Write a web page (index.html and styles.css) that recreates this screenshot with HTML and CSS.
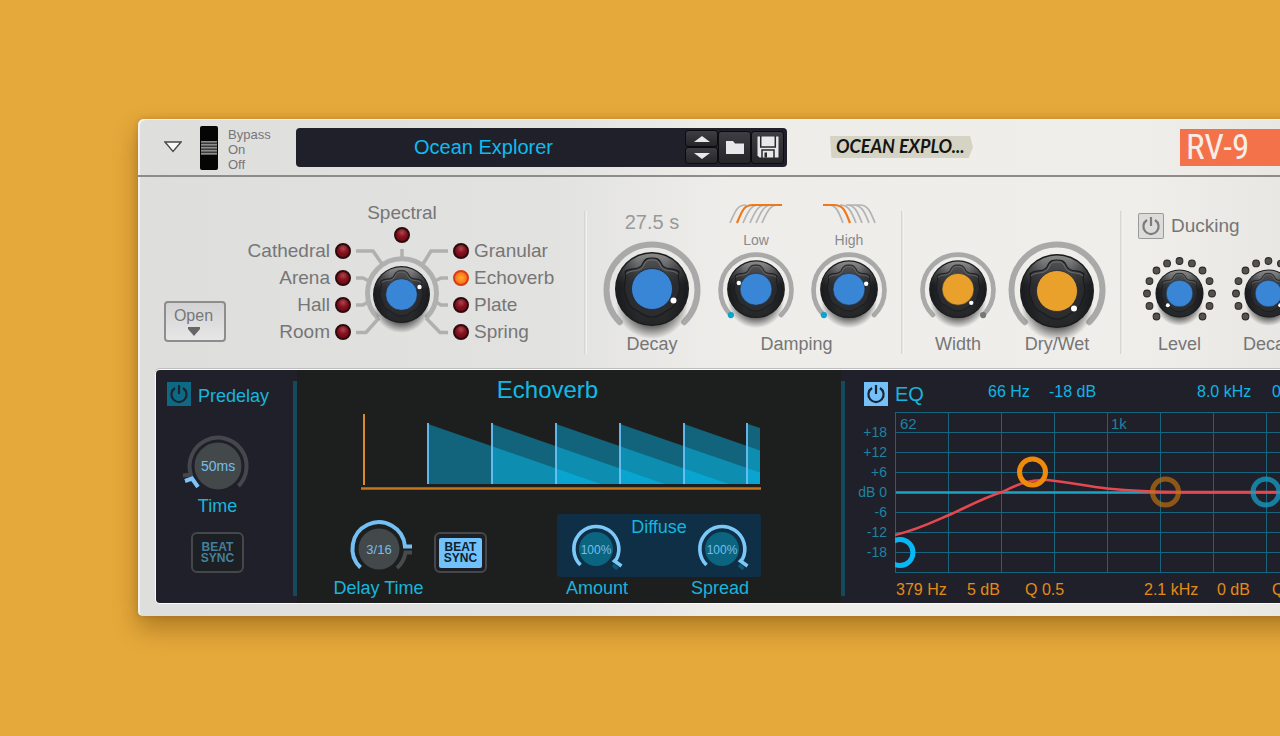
FILE: index.html
```html
<!DOCTYPE html>
<html lang="en">

<head>
    <meta charset="UTF-8">
    <meta name="viewport" content="width=device-width, initial-scale=1.0">
    <title>RV-9 Ocean Explorer</title>
    <link rel="stylesheet" href="styles.css">
</head>

<body>
    <!-- shared knob and icon shapes -->
    <svg class="defs" width="0" height="0" aria-hidden="true">
        <defs>
            <linearGradient id="body-fill" x1="0" y1="0" x2="0" y2="1">
                <stop offset="0" stop-color="#8a8a8a" />
                <stop offset="0.22" stop-color="#5c5d5f" />
                <stop offset="0.42" stop-color="#303134" />
                <stop offset="1" stop-color="#252628" />
            </linearGradient>
            <linearGradient id="side-fill" x1="0" y1="0" x2="1" y2="0">
                <stop offset="0" stop-color="#0c0d10" stop-opacity="0.6" />
                <stop offset="0.3" stop-color="#0c0d10" stop-opacity="0" />
                <stop offset="0.7" stop-color="#0c0d10" stop-opacity="0" />
                <stop offset="1" stop-color="#0c0d10" stop-opacity="0.6" />
            </linearGradient>
            <radialGradient id="shadow-fill">
                <stop offset="0.5" stop-color="#000" stop-opacity="0.75" />
                <stop offset="0.8" stop-color="#000" stop-opacity="0.3" />
                <stop offset="1" stop-color="#000" stop-opacity="0" />
            </radialGradient>
            <symbol id="knob" viewBox="-50 -50 100 100" overflow="visible">
                <ellipse cx="0" cy="16" rx="36" ry="34" fill="url(#shadow-fill)" />
                <circle r="37" fill="#1b1c1e" />
                <circle r="35.5" fill="url(#body-fill)" />
                <circle r="35.5" fill="url(#side-fill)" />
                <path d="M-27 -17 C-22 -22 -14 -18 -10 -24 C-7 -31 -4 -31 0 -31 C4 -31 7 -31 10 -24 C14 -18 22 -22 27 -17 C24 -10 30 -4 27 4 C24 10 25 16 18 20 C12 22 9 28 0 28 C-9 28 -12 22 -18 20 C-25 16 -24 10 -27 4 C-30 -4 -24 -10 -27 -17Z" fill="#2f3033" fill-opacity="0.55" stroke="#1a1b1d" stroke-width="1.2" />
                <path d="M-26 -15 C-21 -20 -14 -16 -9 -22 C-6 -29 -4 -29 0 -29 C4 -29 6 -29 9 -22 C14 -16 21 -20 26 -15" fill="none" stroke="#77787a" stroke-width="0.8" />
                <circle r="20.5" fill="currentColor" stroke="#1a2633" stroke-width="0.8" />
            </symbol>
            <symbol id="ring" viewBox="-50 -50 100 100" overflow="visible">
                <path d="M-32.2 32.2 A45.5 45.5 0 1 1 32.2 32.2" fill="none" stroke="#a9a9a9" stroke-width="6" stroke-linecap="round" />
            </symbol>
            <symbol id="dots" viewBox="-50 -50 100 100" overflow="visible">
                <g fill="#55524e" stroke="#2b2927" stroke-width="1.6">
                    <circle cx="-35.4" cy="35.4" r="5.2" /><circle cx="-46.2" cy="19.1" r="5.2" /><circle cx="-50" cy="0" r="5.2" />
                    <circle cx="-46.2" cy="-19.1" r="5.2" /><circle cx="-35.4" cy="-35.4" r="5.2" /><circle cx="-19.1" cy="-46.2" r="5.2" />
                    <circle cx="0" cy="-50" r="5.2" /><circle cx="19.1" cy="-46.2" r="5.2" /><circle cx="35.4" cy="-35.4" r="5.2" />
                    <circle cx="46.2" cy="-19.1" r="5.2" /><circle cx="50" cy="0" r="5.2" /><circle cx="46.2" cy="19.1" r="5.2" />
                    <circle cx="35.4" cy="35.4" r="5.2" />
                </g>
            </symbol>
            <symbol id="power" viewBox="0 0 24 24">
                <path d="M8 6 A7.6 7.6 0 1 0 16 6 M12 3 V12" fill="none" stroke="currentColor" stroke-width="2.2" />
            </symbol>
        </defs>
    </svg>

    <main class="device">
        <header class="top-bar">
            <button class="fold" aria-label="Fold">
                <svg width="18" height="12" viewBox="0 0 18 12"><path d="M1 1 H17 L9 10.5Z" fill="#fafafa" stroke="#4a4a4a" stroke-width="1.4" /></svg>
            </button>
            <div class="switch">
                <span class="switch-grip"></span>
                <input type="range" min="0" max="2" value="1" aria-label="Bypass, On, Off">
            </div>
            <div class="switch-labels">
                <span>Bypass</span>
                <span>On</span>
                <span>Off</span>
            </div>
            <div class="patch">
                <span class="patch-name">Ocean Explorer</span>
                <div class="patch-step">
                    <button aria-label="Previous patch"><svg width="16" height="6" viewBox="0 0 16 6"><path d="M0 6 L8 0 L16 6Z" fill="#e8e8ea" /></svg></button>
                    <button aria-label="Next patch"><svg width="16" height="6" viewBox="0 0 16 6"><path d="M0 0 L8 6 L16 0Z" fill="#e8e8ea" /></svg></button>
                </div>
                <button class="patch-button" aria-label="Browse patches">
                    <svg width="18" height="14" viewBox="0 0 18 14"><path d="M0 1 H7 L9 3.5 H18 V14 H0Z" fill="#e8e8ea" /></svg>
                </button>
                <button class="patch-button" aria-label="Save patch">
                    <svg width="22" height="22" viewBox="0 0 22 22">
                        <path d="M0.5 0.5 H21.5 V21.5 H2.5 L0.5 19.5Z" fill="#e8e8ea" />
                        <path d="M3.7 0 V11 H18.3 V0 M5 22 V14 H17 V22" fill="none" stroke="#28282d" stroke-width="1.5" />
                        <path d="M7.5 16.5 H10 V21.5 H7.5Z" fill="#28282d" />
                    </svg>
                </button>
            </div>
            <div class="tape">OCEAN EXPLO...</div>
            <div class="brand">RV-9</div>
        </header>

        <section class="controls">
            <div class="algorithm">
                <button class="open">
                    Open
                    <svg width="12" height="9" viewBox="0 0 12 9"><path d="M0 0 H12 V2 L6 9 L0 2Z" fill="#666" /></svg>
                </button>
                <div class="selector" role="radiogroup" aria-label="Algorithm">
                    <div class="bank bank-left">
                        <label>Cathedral <input type="radio" name="algo"></label>
                        <label>Arena <input type="radio" name="algo"></label>
                        <label>Hall <input type="radio" name="algo"></label>
                        <label>Room <input type="radio" name="algo"></label>
                    </div>
                    <div class="dial">
                        <label class="spectral">Spectral <input type="radio" name="algo"></label>
                        <svg class="blue" width="102" height="108" viewBox="0 0 102 108">
                            <g fill="none" stroke="#b0b0b0" stroke-width="3.5">
                                <path d="M5 14 H22 L31 27 M97 14 H80 L72 27 M51 12 V24" />
                                <path d="M5 41 H12 L18 44 M97 41 H90 L84 44 M5 68 H12 L17 65 M97 68 H90 L85 65" />
                                <path d="M5 95.5 H15 L28 81 M97 95.5 H89 L75 81" />
                                <path d="M27 81 A34.5 34.5 0 1 1 75 81" stroke-width="5" />
                            </g>
                            <use href="#knob" x="12" y="19" width="77" height="77" />
                            <circle cx="68.5" cy="50" r="2.2" fill="#fff" />
                        </svg>
                    </div>
                    <div class="bank">
                        <label><input type="radio" name="algo"> Granular</label>
                        <label><input type="radio" name="algo" checked> Echoverb</label>
                        <label><input type="radio" name="algo"> Plate</label>
                        <label><input type="radio" name="algo"> Spring</label>
                    </div>
                </div>
            </div>

            <div class="divider"></div>

            <div class="group reverb">
                <div class="knob-block">
                    <span class="readout">27.5 s</span>
                    <div class="knob knob-large blue">
                        <svg viewBox="-50 -50 100 100">
                            <use href="#ring" x="-50" y="-50" width="100" height="100" />
                            <use href="#knob" x="-50" y="-51" width="100" height="100" />
                            <circle cx="21.5" cy="10.5" r="3" fill="#fff" />
                        </svg>
                        <input type="range" id="decay" value="70">
                    </div>
                    <label for="decay">Decay</label>
                </div>
                <div class="damping">
                    <div class="damping-knobs">
                        <div class="knob-block">
                            <svg class="filter" width="54" height="22" viewBox="0 0 54 22">
                                <g fill="none" stroke="#b4b4b4" stroke-width="1.7">
                                    <path d="M1 20 C7 6 9 2 17 2 M14 20 C20 6 23 2 30 2 M21 20 C27 6 30 2 37 2 M27 20 C33 6 36 2 43 2 M33 20 C39 6 42 2 49 2" />
                                    <path d="M8 20 C14 5 16 2 24 2 H53" stroke="#f07818" stroke-width="2.2" />
                                </g>
                            </svg>
                            <label class="small-label" for="low">Low</label>
                            <div class="knob knob-small blue">
                                <svg viewBox="-50 -50 100 100">
                                    <use href="#ring" x="-50" y="-50" width="100" height="100" />
                                    <use href="#knob" x="-50" y="-51" width="100" height="100" />
                                    <circle cx="-22" cy="-9" r="2.8" fill="#fff" />
                                    <circle cx="-32.2" cy="32.2" r="4" fill="#0aa5cf" />
                                </svg>
                                <input type="range" id="low" value="0">
                            </div>
                        </div>
                        <div class="knob-block">
                            <svg class="filter" width="54" height="22" viewBox="0 0 54 22">
                                <g fill="none" stroke="#b4b4b4" stroke-width="1.7">
                                    <path d="M21 20 C16 7 14 2 6 2 M34 20 C29 7 26 2 18 2 M40 20 C35 7 32 2 25 2 M47 20 C42 7 39 2 31 2 M53 20 C48 7 45 2 38 2 H24" />
                                    <path d="M1 2 H12 C21 2 23 7 28 20" stroke="#f07818" stroke-width="2.2" />
                                </g>
                            </svg>
                            <label class="small-label" for="high">High</label>
                            <div class="knob knob-small blue">
                                <svg viewBox="-50 -50 100 100">
                                    <use href="#ring" x="-50" y="-50" width="100" height="100" />
                                    <use href="#knob" x="-50" y="-51" width="100" height="100" />
                                    <circle cx="22" cy="-8" r="2.8" fill="#fff" />
                                    <circle cx="-32.2" cy="32.2" r="4" fill="#0aa5cf" />
                                </svg>
                                <input type="range" id="high" value="0">
                            </div>
                        </div>
                    </div>
                    <span class="group-label">Damping</span>
                </div>
            </div>

            <div class="divider"></div>

            <div class="group mix">
                <div class="knob-block">
                    <div class="knob knob-small amber">
                        <svg viewBox="-50 -50 100 100">
                            <use href="#ring" x="-50" y="-50" width="100" height="100" />
                            <use href="#knob" x="-50" y="-51" width="100" height="100" />
                            <circle cx="17" cy="16.5" r="2.8" fill="#fff" />
                            <circle cx="32.2" cy="32.2" r="4" fill="#777" />
                        </svg>
                        <input type="range" id="width" value="100">
                    </div>
                    <label for="width">Width</label>
                </div>
                <div class="knob-block">
                    <div class="knob knob-large amber">
                        <svg viewBox="-50 -50 100 100">
                            <use href="#ring" x="-50" y="-50" width="100" height="100" />
                            <use href="#knob" x="-50" y="-49" width="100" height="100" />
                            <circle cx="17" cy="18.5" r="3" fill="#fff" />
                        </svg>
                        <input type="range" id="drywet" value="90">
                    </div>
                    <label for="drywet">Dry/Wet</label>
                </div>
            </div>

            <div class="divider"></div>

            <div class="ducking">
                <div class="ducking-head">
                    <button class="power power-grey" aria-label="Ducking on"><svg width="24" height="24"><use href="#power" /></svg></button>
                    Ducking
                </div>
                <div class="ducking-knobs">
                    <div class="knob-block">
                        <div class="knob knob-mini blue">
                            <svg viewBox="-50 -50 100 100">
                                <use href="#dots" x="-50" y="-50" width="100" height="100" />
                                <use href="#knob" x="-50" y="-50" width="100" height="100" />
                                <circle cx="-18" cy="18" r="3" fill="#fff" />
                            </svg>
                            <input type="range" id="level" value="0">
                        </div>
                        <label for="level">Level</label>
                    </div>
                    <div class="knob-block">
                        <div class="knob knob-mini blue">
                            <svg viewBox="-50 -50 100 100">
                                <use href="#dots" x="-50" y="-50" width="100" height="100" />
                                <use href="#knob" x="-50" y="-50" width="100" height="100" />
                                <circle cx="18" cy="18" r="3" fill="#fff" />
                            </svg>
                            <input type="range" id="duck-decay" value="100">
                        </div>
                        <label for="duck-decay">Decay</label>
                    </div>
                </div>
            </div>
        </section>

        <section class="display">
            <div class="predelay">
                <div class="panel-head">
                    <button class="power power-dim" aria-label="Predelay on"><svg width="24" height="24"><use href="#power" /></svg></button>
                    <label for="time">Predelay</label>
                </div>
                <div class="predelay-body">
                    <div class="knob">
                        <svg width="72" height="60" viewBox="-36 -30 72 60">
                            <path d="M20.500 20 A28.500 28.500 0 1 0 -27.200 8.500 L-35 9.500" fill="none" stroke="#45474d" stroke-width="4" />
                            <circle r="23.5" fill="#43484b" />
                            <path d="M-33 15 L-26 12.5 L-20 21" fill="none" stroke="#7cc4fa" stroke-width="4" />
                            <text y="5" font-size="14">50ms</text>
                        </svg>
                        <input type="range" id="time" value="5">
                    </div>
                    <label for="time">Time</label>
                    <button class="sync">BEAT<br>SYNC</button>
                </div>
            </div>

            <div class="bar"></div>

            <div class="echo">
                <h2>Echoverb</h2>
                <svg class="echo-graph" width="400" height="80" viewBox="0 0 400 80">
                    <!-- one wedge per echo, overlaps get brighter -->
                    <g fill="#12647c">
                        <path d="M67 12 L240 72 H67Z" />
                        <path d="M131 12 L304 72 H131Z" />
                        <path d="M195 12 L368 72 H195Z" />
                        <path d="M259 12 L399 60.5 V72 H259Z" />
                        <path d="M323 12 L399 38.4 V72 H323Z" />
                        <path d="M387 12 L399 16 V72 H387Z" />
                    </g>
                    <g fill="#0d8db0">
                        <path d="M131 34.2 L240 72 H131Z" />
                        <path d="M195 34.2 L304 72 H195Z" />
                        <path d="M259 34.2 L368 72 H259Z" />
                        <path d="M323 34.2 L399 60.5 V72 H323Z" />
                        <path d="M387 34.2 L399 38.4 V72 H387Z" />
                    </g>
                    <g fill="#09a4cf">
                        <path d="M195 56.4 L240 72 H195Z" />
                        <path d="M259 56.4 L304 72 H259Z" />
                        <path d="M323 56.4 L368 72 H323Z" />
                        <path d="M387 56.4 L399 60.5 V72 H387Z" />
                    </g>
                    <path d="M67 11 V72 M131 11 V72 M195 11 V72 M259 11 V72 M323 11 V72 M386 11 V72" stroke="#6fc3f7" stroke-width="1.8" />
                    <path d="M3 2 V73" stroke="#d98a2b" stroke-width="2" />
                    <path d="M0 76.5 H400" stroke="#c8751c" stroke-width="2.4" />
                </svg>
                <div class="echo-row">
                    <div class="delay-block">
                        <div class="knob">
                            <svg width="68" height="56" viewBox="-34 -28 68 56">
                                <circle r="20.5" fill="#43484a" />
                                <path d="M33 3.5 H26.5 A26 26 0 0 1 18 19" fill="none" stroke="#484b4d" stroke-width="4" />
                                <path d="M-18.5 18.5 A26.3 26.3 0 1 1 26 -2.5 H33" fill="none" stroke="#74bff6" stroke-width="4" />
                                <text y="5" font-size="13">3/16</text>
                            </svg>
                            <input type="range" id="delay-time" value="80">
                        </div>
                        <label for="delay-time">Delay Time</label>
                    </div>
                    <button class="sync sync-on"><span>BEAT<br>SYNC</span></button>
                    <div class="diffuse">
                        <div class="diffuse-panel">
                            <div class="knob">
                                <svg width="60" height="48" viewBox="-30 -24 60 48">
                                    <circle r="17" fill="#0b6480" />
                                    <path d="M-15.5 16 A22.5 22.5 0 1 1 20.5 10 L18.5 12 L25.5 17" fill="none" stroke="#7cc8f8" stroke-width="3.6" />
                                    <path d="M17 16 L21.5 20" stroke="#0e5870" stroke-width="3.6" />
                                    <text y="5" font-size="12">100%</text>
                                </svg>
                                <input type="range" id="amount" value="100">
                            </div>
                            <span>Diffuse</span>
                            <div class="knob">
                                <svg width="60" height="48" viewBox="-30 -24 60 48">
                                    <circle r="17" fill="#0b6480" />
                                    <path d="M-15.5 16 A22.5 22.5 0 1 1 20.5 10 L18.5 12 L25.5 17" fill="none" stroke="#7cc8f8" stroke-width="3.6" />
                                    <path d="M17 16 L21.5 20" stroke="#0e5870" stroke-width="3.6" />
                                    <text y="5" font-size="12">100%</text>
                                </svg>
                                <input type="range" id="spread" value="100">
                            </div>
                        </div>
                        <div class="diffuse-labels">
                            <label for="amount">Amount</label>
                            <label for="spread">Spread</label>
                        </div>
                    </div>
                </div>
            </div>

            <div class="bar"></div>

            <div class="eq">
                <div class="eq-head">
                    <button class="power power-lit" aria-label="EQ on"><svg width="24" height="24"><use href="#power" /></svg></button>
                    <h2>EQ</h2>
                    <div class="eq-shelves">
                        <span>66 Hz</span>
                        <span>-18 dB</span>
                        <span>8.0 kHz</span>
                        <span>0 dB</span>
                    </div>
                </div>
                <div class="eq-main">
                    <div class="scale">
                        <span>+18</span>
                        <span>+12</span>
                        <span>+6</span>
                        <span>dB&nbsp;0</span>
                        <span>-6</span>
                        <span>-12</span>
                        <span>-18</span>
                    </div>
                    <svg class="eq-graph" width="478" height="162" viewBox="0 0 478 162">
                        <path d="M0 0.5 H478 M0 20.5 H478 M0 40.5 H478 M0 60.5 H478 M0 100.5 H478 M0 120.5 H478 M0 140.5 H478 M0 160.5 H478
                            M0.5 0 V161 M53.5 0 V161 M106.5 0 V161 M159.5 0 V161 M212.5 0 V161 M265.5 0 V161 M318.5 0 V161 M371.5 0 V161 M424.5 0 V161" stroke="#17657c" />
                        <path d="M1 80.5 H478" stroke="#1ba3c6" stroke-width="2.4" />
                        <text class="freq" x="5" y="17">62</text>
                        <text class="freq" x="216" y="17">1k</text>
                        <path d="M0 123 C22 118 38 110 54 103 S88 86 107 80 C124 72 134 67 152 68 C174 70 190 74 212 76.5 C236 79 256 80 286 80 H478" fill="none" stroke="#e5484f" stroke-width="2.5" />
                        <g fill="none" stroke-width="5">
                            <circle cx="5" cy="140.5" r="13" stroke="#08b8f4" />
                            <circle cx="137.5" cy="60" r="13" stroke="#f08a0a" />
                            <circle cx="270.5" cy="80" r="13" stroke="#c87410" stroke-opacity="0.65" />
                            <circle cx="371" cy="80" r="13" stroke="#159fc8" stroke-opacity="0.75" />
                        </g>
                    </svg>
                </div>
                <div class="eq-bands">
                    <span>379 Hz</span>
                    <span>5 dB</span>
                    <span>Q 0.5</span>
                    <span>2.1 kHz</span>
                    <span>0 dB</span>
                    <span>Q 0.5</span>
                </div>
            </div>
        </section>
    </main>
</body>

</html>
```
FILE: styles.css
```css
* {
    box-sizing: border-box;
}

body {
    margin: 0;
    padding: 119px 0 120px 138px;
    background-color: #e5a83a;
    font-family: "Liberation Sans", Arial, sans-serif;
    color: #767676;
    overflow: hidden;
}

button {
    font-family: inherit;
    padding: 0;
    border: none;
    cursor: pointer;
}

svg {
    display: block;
}

h2 {
    margin: 0;
    font-weight: normal;
}

.defs {
    position: absolute;
}

/* the right end of the unit runs off the window */
.device {
    margin-right: -40px;
    background: linear-gradient(90deg, #dededd 0, #e2e2e1 35%, #eeedea 50%, #efeeeb 85%, #e6e5e2 100%);
    border-radius: 6px 0 0 5px;
    box-shadow: 0 12px 24px rgba(90, 55, 0, 0.4), 0 0 6px rgba(90, 55, 0, 0.2), inset 2px 1px 0 #f3f2ee;
    padding-bottom: 13px;
    white-space: nowrap;
}

/* top bar */
.top-bar {
    display: flex;
    align-items: center;
    height: 58px;
    padding-left: 26px;
    border-bottom: 2px solid #8c8c8b;
}

.fold {
    background: none;
    margin-right: 18px;
}

.switch {
    position: relative;
    width: 18px;
    height: 44px;
    background: #050505;
    border-radius: 2px;
    padding-top: 15px;
    margin-top: 2px;
}

.switch-grip {
    display: block;
    height: 14px;
    background: repeating-linear-gradient(#8e8e8e 0, #8e8e8e 1px, #3a3a3a 2px, #3a3a3a 3px);
    margin: 0 1px;
}

.switch input,
.knob input {
    position: absolute;
    inset: 0;
    width: 100%;
    height: 100%;
    margin: 0;
    opacity: 0;
    cursor: pointer;
}

.switch-labels {
    display: flex;
    flex-direction: column;
    width: 78px;
    padding: 4px 0 0 10px;
    font-size: 13px;
    line-height: 15px;
}

.patch {
    display: flex;
    align-items: center;
    gap: 2px;
    width: 491px;
    height: 39px;
    padding-right: 4px;
    background: #20202a;
    border-radius: 4px;
}

.patch-name {
    flex: 1;
    padding-left: 118px;
    font-size: 20px;
    color: #0cbcf2;
}

.patch-step {
    display: flex;
    flex-direction: column;
    gap: 2px;
}

.patch button {
    display: flex;
    align-items: center;
    justify-content: center;
    width: 31px;
    height: 31px;
    background: linear-gradient(#3d3d43, #25252a);
    border-radius: 3px;
    box-shadow: 0 0 0 1px #0c0c0f;
}

.patch .patch-step button {
    height: 15px;
}

.tape {
    width: 143px;
    height: 22px;
    margin-left: 43px;
    padding-left: 6px;
    background: #d5d4c4;
    clip-path: polygon(0 0, 98% 0, 100% 50%, 97% 100%, 1% 100%);
    font-family: Lato, "Liberation Sans", sans-serif;
    font-size: 18px;
    font-weight: 700;
    font-style: italic;
    line-height: 20px;
    color: #141414;
}

.brand {
    flex: 1;
    height: 37px;
    margin-left: 207px;
    padding-left: 6px;
    background: #f4724a;
    font-family: "Roboto Condensed", "Liberation Sans Narrow", "Liberation Sans", sans-serif;
    font-size: 35px;
    line-height: 38px;
    color: #f7ede6;
}

/* light panel */
.controls {
    display: flex;
    align-items: flex-end;
    padding: 26px 0 14px;
}

.divider {
    flex: none;
    width: 3px;
    height: 143px;
    background: linear-gradient(90deg, #cfcfd2, #fbfaf0);
}

.algorithm {
    display: flex;
    align-items: flex-end;
    flex: none;
    width: 446px;
    padding-left: 26px;
}

.open {
    display: flex;
    flex-direction: column;
    align-items: center;
    gap: 2px;
    width: 62px;
    height: 41px;
    margin-bottom: 12px;
    padding: 4px 3px 0 0;
    border: 2px solid #8d8d8d;
    border-radius: 4px;
    background: linear-gradient(#d3d3d3, #e6e6e6);
    font-size: 16px;
    line-height: 18px;
    color: #777;
}

.selector {
    display: flex;
    align-items: flex-end;
    margin-bottom: 9px;
}

.bank {
    width: 109px;
}

.bank-left {
    width: 125px;
}

.bank label {
    display: flex;
    align-items: center;
    gap: 5px;
    height: 27px;
    font-size: 19px;
}

.bank-left label {
    justify-content: flex-end;
}

.spectral {
    display: flex;
    flex-direction: column;
    align-items: center;
    gap: 4px;
    margin-bottom: -6px;
    font-size: 19px;
    line-height: 20px;
}

.selector input {
    appearance: none;
    width: 16px;
    height: 16px;
    margin: 0;
    border: 2px solid #2b0b0e;
    border-radius: 50%;
    background: radial-gradient(circle at 50% 30%, #a84850 0, #86101c 45%, #650812 100%);
}

.selector input:checked {
    border-color: #d83c14;
    background: radial-gradient(circle, #ffae30 0, #fa7a1c 60%, #ee4a18 100%);
}

.blue {
    color: #3a86d6;
}

.amber {
    color: #eaa12b;
}

.group {
    display: flex;
    align-items: flex-end;
    flex: none;
    padding-left: 15px;
}

.reverb {
    gap: 15px;
    width: 314px;
}

.mix {
    gap: 10px;
    width: 216px;
}

.knob-block,
.damping {
    display: flex;
    flex-direction: column;
    align-items: center;
    font-size: 18px;
    line-height: 20px;
}

.damping-knobs {
    display: flex;
    gap: 15px;
}

.group-label {
    padding-right: 12px;
}

.knob {
    position: relative;
}

.knob svg {
    overflow: visible;
}

.knob-large {
    width: 100px;
    height: 100px;
    margin-bottom: -6px;
}

.knob-small {
    width: 78px;
    height: 78px;
    margin-bottom: 5px;
}

.knob-mini {
    width: 65px;
    height: 65px;
    margin-bottom: 8px;
}

.knob-block label {
    position: relative;
}

.readout {
    font-size: 20px;
    line-height: 24px;
    margin-bottom: 6px;
    color: #999;
}

.filter {
    margin-bottom: 6px;
}

.small-label {
    font-size: 14px;
    line-height: 18px;
    margin-bottom: 2px;
    color: #8a8a8a;
}

.ducking {
    flex: none;
    padding-left: 16px;
}

.ducking-head {
    display: flex;
    align-items: center;
    gap: 8px;
    margin-bottom: 23px;
    font-size: 19px;
}

.ducking-knobs {
    display: flex;
    gap: 24px;
    padding-left: 8px;
}

.power {
    flex: none;
    width: 24px;
    height: 24px;
}

.power-grey {
    background: #dcdcda;
    color: #7c7c7c;
    box-shadow: 0 0 0 1px #9a9a9a;
    border-radius: 1px;
}

.power-dim {
    background: #0e6a84;
    color: #1d2230;
}

.power-lit {
    background: #74c0f8;
    color: #1c2434;
}

/* dark display */
.display {
    display: flex;
    align-items: stretch;
    height: 233px;
    margin: 2px 0 0 18px;
    padding-top: 11px;
    background: #20202a;
    border-radius: 4px 0 0 4px;
    box-shadow: 0 0 0 1px #fbfaf5, 0 -1px 0 1px #bdbdbd;
    font-size: 18px;
    line-height: 20px;
    color: #17b5dd;
    overflow: hidden;
}

.bar {
    flex: none;
    width: 4px;
    margin-bottom: 7px;
    background: #17495c;
}

.predelay {
    flex: none;
    width: 137px;
}

.panel-head {
    display: flex;
    align-items: center;
    gap: 7px;
    padding: 1px 0 0 11px;
}

.panel-head label {
    padding-top: 4px;
}

.predelay-body {
    display: flex;
    flex-direction: column;
    align-items: center;
    padding: 30px 14px 0 0;
}

.predelay-body label {
    margin-bottom: 16px;
}

.knob text {
    fill: #74bfec;
    text-anchor: middle;
}

.sync {
    flex: none;
    width: 53px;
    height: 41px;
    padding: 4px;
    background: #1c1f24;
    border: 2px solid #46474a;
    border-radius: 6px;
    font-size: 12px;
    font-weight: bold;
    line-height: 11px;
    color: #45809a;
}

.sync-on {
    padding: 2px 3px;
}

.sync-on span {
    display: block;
    padding: 4px 0;
    background: #6fc2fb;
    border-radius: 2px;
    color: #10202c;
}

.echo {
    flex: none;
    width: 544px;
    margin: -11px 0 0;
    padding: 8px 80px 0 37px;
    background: #1d1f1e;
}

.echo h2 {
    font-size: 24px;
    line-height: 24px;
    text-align: center;
    color: #13b9e6;
}

.echo-graph {
    margin: 10px 0 22px auto;
}

.echo-row {
    display: flex;
    align-items: flex-start;
}

.delay-block {
    display: flex;
    flex-direction: column;
    align-items: center;
    gap: 1px;
    width: 89px;
    padding-top: 7px;
}

.echo-row .sync {
    margin: 18px 0 0 11px;
}

.diffuse {
    width: 204px;
    margin-left: auto;
}

.diffuse-panel {
    display: flex;
    justify-content: space-between;
    height: 63px;
    padding: 3px 9px;
    background: #0e2f46;
    border-radius: 3px;
}

.diffuse-panel .knob {
    padding-top: 8px;
}

.diffuse-labels {
    display: flex;
    justify-content: space-between;
    padding: 1px 12px 0 9px;
}

.eq {
    flex: 1;
    min-width: 0;
    overflow: hidden;
    padding-left: 13px;
    font-size: 16px;
}

.eq-head {
    display: flex;
    align-items: center;
    padding: 1px 0 0 6px;
}

.eq h2 {
    flex: none;
    width: 100px;
    padding-left: 7px;
    font-size: 20px;
}

.eq-shelves {
    display: grid;
    flex: none;
    grid-template-columns: 61px 148px 75px 60px;
    padding-bottom: 4px;
    color: #10b4e6;
}

.eq-main {
    display: flex;
    margin: 6px 0;
}

.scale {
    display: flex;
    flex-direction: column;
    flex: none;
    width: 37px;
    padding: 10px 8px 0 0;
    font-size: 14px;
    text-align: right;
    color: #1b84a0;
}

.eq-graph {
    flex: none;
}

.freq {
    font-size: 15px;
    fill: #1b84a0;
}

.eq-bands {
    display: grid;
    grid-template-columns: 71px 58px 119px 73px 55px 60px;
    padding-left: 38px;
    color: #e58a16;
}
```
